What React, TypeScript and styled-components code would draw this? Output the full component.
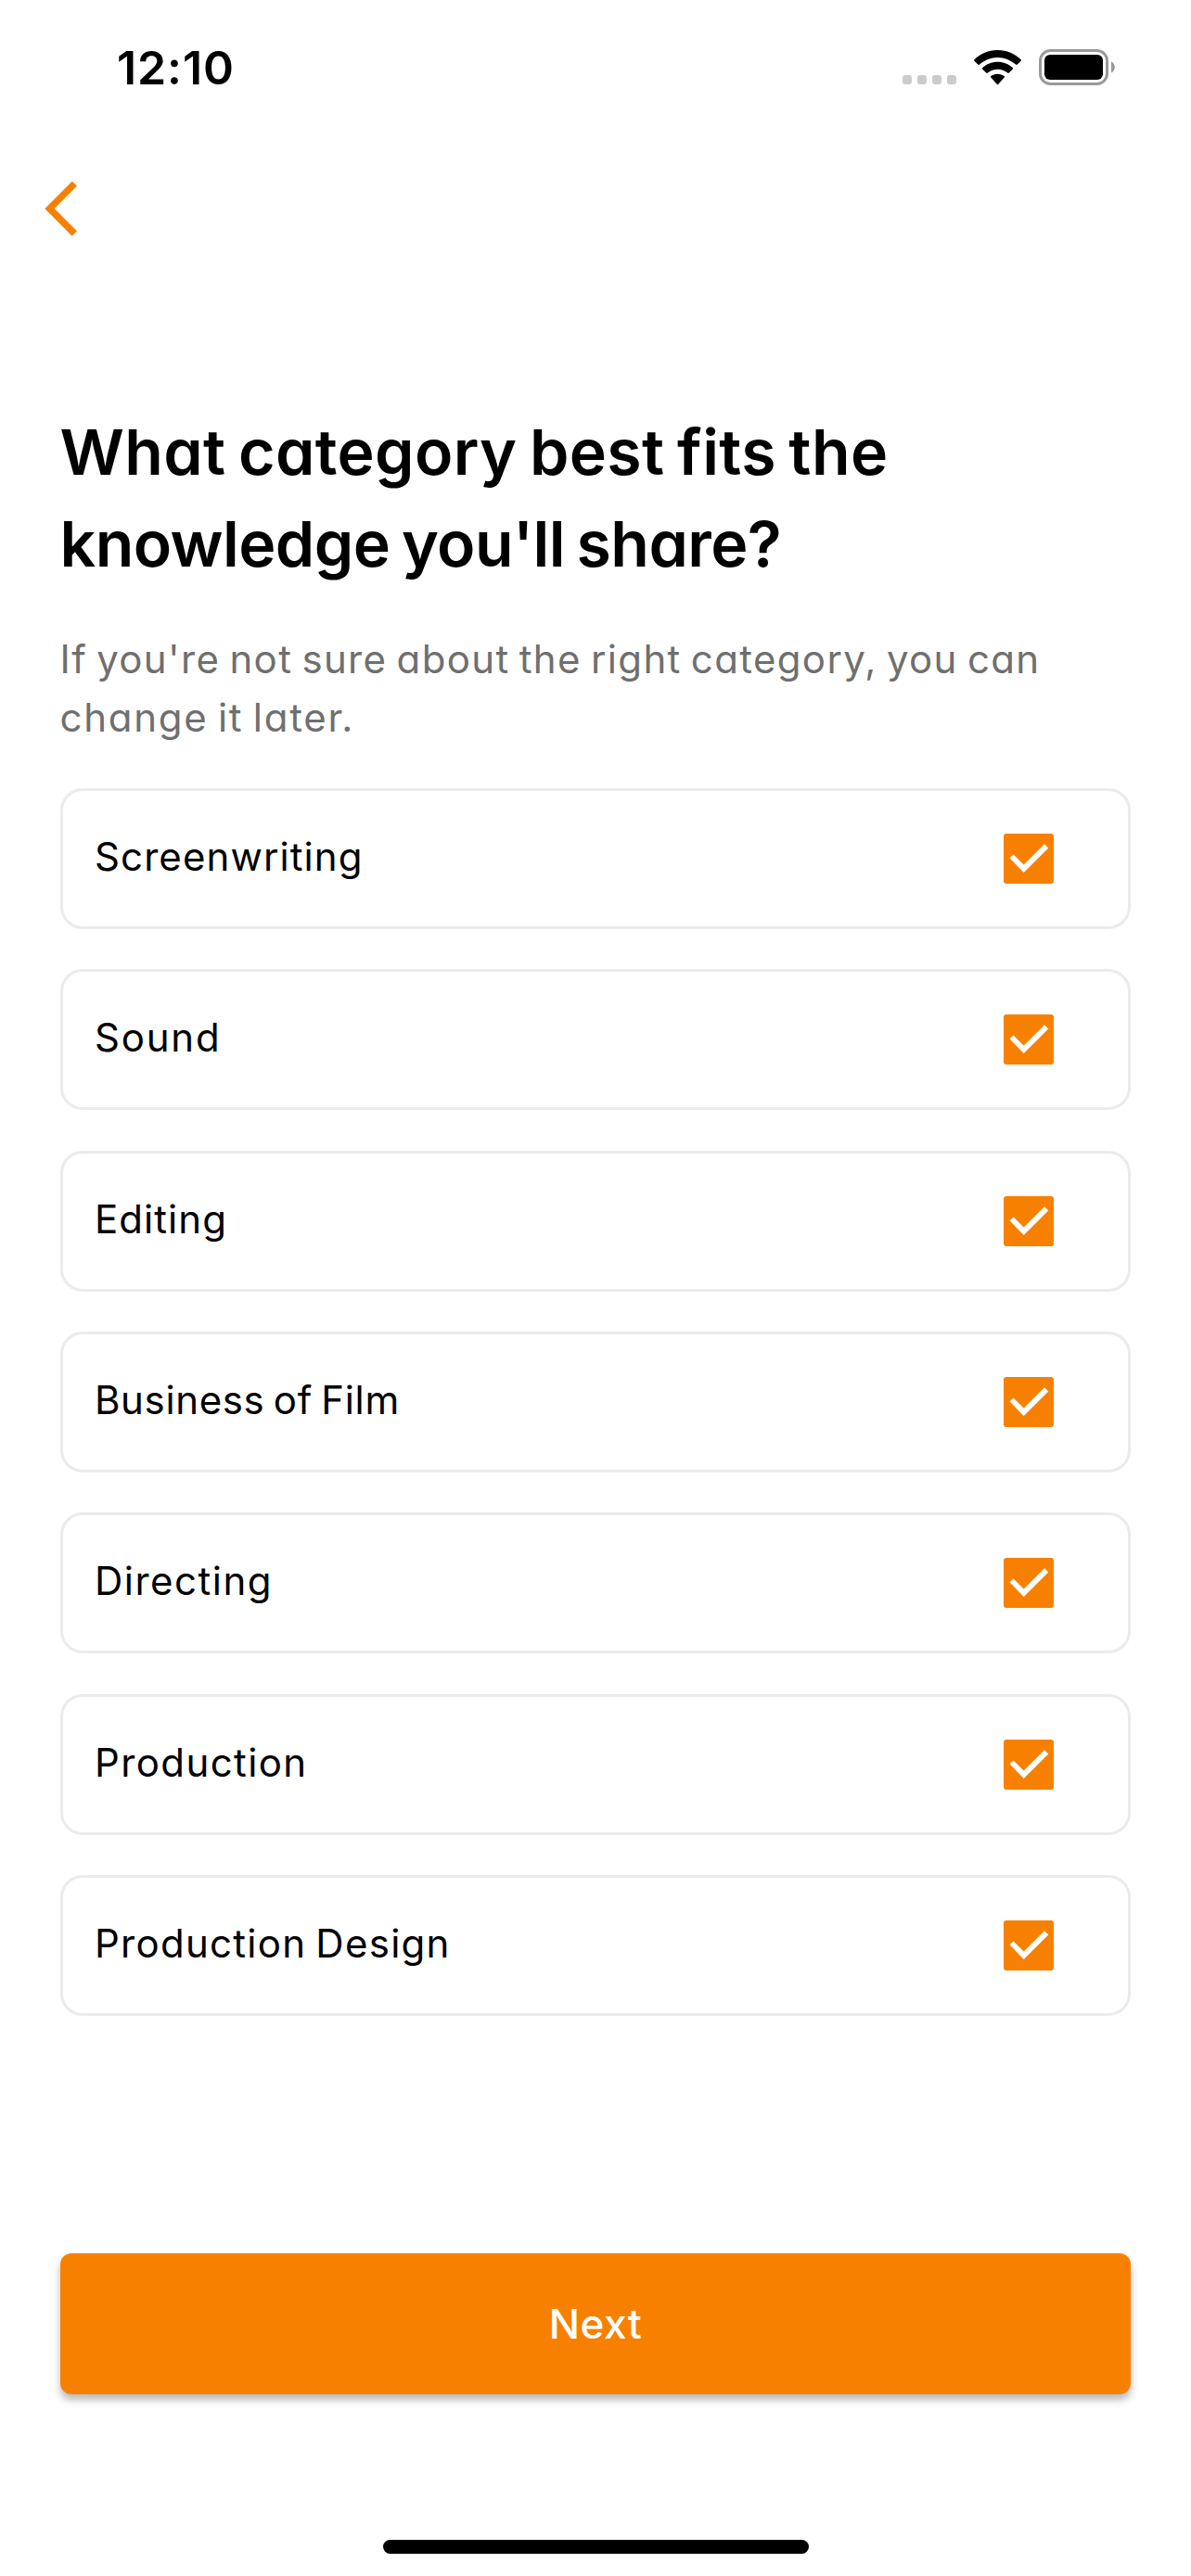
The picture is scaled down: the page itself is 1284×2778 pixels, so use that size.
import React from 'react';
import styled, { createGlobalStyle } from 'styled-components';

const orange = '#f88000';

const GlobalStyle = createGlobalStyle`
  * { box-sizing: border-box; }
  body {
    margin: 0;
    background: #fff;
    color: #000;
    font-family: Inter, "Open Sans", sans-serif;
  }
`;

const Screen = styled.div`
  display: flex;
  flex-direction: column;
  width: 1284px;
  height: 2778px;
  background: #fff;
  overflow: hidden;
`;

const StatusBar = styled.header`
  display: flex;
  justify-content: space-between;
  height: 141px;
  padding: 43px 82px 0 126px;
`;

const Clock = styled.time`
  font-size: 50px;
  font-weight: 600;
  line-height: 60px;
  letter-spacing: 0.9px;
`;

const StatusIcons = styled.div`
  display: flex;
  align-items: flex-end;
  height: 49px;
`;

const Dots = styled.div`
  display: flex;
  gap: 6px;
  margin: 0 19px 1px 0;
`;

const Dot = styled.i`
  width: 10px;
  height: 10px;
  border-radius: 3.2px;
  background: #cbcbcb;
`;

const StatusSvg = styled.svg<{ $gap?: number }>`
  display: block;
  margin-right: ${(p) => p.$gap ?? 0}px;
`;

const NavBar = styled.nav`
  display: flex;
  align-items: center;
  height: 168px;
  padding-left: 48px;
`;

const BackButton = styled.button`
  display: flex;
  padding: 0;
  border: 0;
  background: none;
`;

const Content = styled.main`
  display: flex;
  flex-direction: column;
  padding: 129px 65px 0;
`;

const Title = styled.h1`
  margin: 0 0 43px;
  font-size: 68px;
  font-weight: 600;
  line-height: 99px;
  word-spacing: -4px;
  font-feature-settings: "cv11";
`;

const Hint = styled.p`
  margin: 0 0 45px;
  font-size: 42px;
  line-height: 63px;
  word-spacing: -3px;
  color: #6f6f6f;
  font-feature-settings: "cv11";
`;

const Line = styled.span<{ $tracking: number }>`
  display: block;
  margin-left: -0.5px;
  letter-spacing: ${(p) => p.$tracking}px;
  white-space: nowrap;
`;

const List = styled.ul`
  display: flex;
  flex-direction: column;
  gap: 43.33px;
  margin: 0;
  padding: 0;
  list-style: none;
`;

const Card = styled.li`
  display: flex;
  align-items: center;
  justify-content: space-between;
  height: 152px;
  padding: 0 80px 0 34px;
  border: 3px solid #ebebeb;
  border-radius: 24px;
`;

const Label = styled.span<{ $tracking: number }>`
  padding-bottom: 4px;
  font-size: 42px;
  line-height: 60px;
  letter-spacing: ${(p) => p.$tracking}px;
  word-spacing: -3px;
  font-feature-settings: "cv11";
`;

const Checkbox = styled.span`
  display: block;
  width: 54px;
  height: 54px;
  border-radius: 3px;
  background: ${orange};
`;

const NextButton = styled.button`
  height: 152px;
  margin-top: 256.5px;
  padding: 0;
  border: 0;
  border-radius: 12px;
  background: ${orange};
  box-shadow: 0 6px 9px rgba(0, 0, 0, 0.28);
  color: #fff;
  font: 500 44px/60px Inter, "Open Sans", sans-serif;
  letter-spacing: 0.5px;
`;

const HomeIndicator = styled.div`
  width: 459px;
  height: 15px;
  margin: auto auto 24px;
  border-radius: 7.5px;
  background: #000;
`;

const categories = [
  { name: 'Screenwriting', tracking: 1.1 },
  { name: 'Sound', tracking: 1.8 },
  { name: 'Editing', tracking: 1.05 },
  { name: 'Business of Film', tracking: 0.64 },
  { name: 'Directing', tracking: 1.5 },
  { name: 'Production', tracking: 1.4 },
  { name: 'Production Design', tracking: 1.27 },
];

export default function App() {
  return (
    <>
      <GlobalStyle />
      <Screen>
        <StatusBar>
          <Clock>12:10</Clock>
          <StatusIcons>
            <Dots>
              <Dot />
              <Dot />
              <Dot />
              <Dot />
            </Dots>
            <StatusSvg $gap={19} width="51" height="38" viewBox="0 0 51 38" fill="#000">
              <path d="M25.5 0C35.3 0 44.2 3.8 50.6 10.2C51.1 10.7 51.1 11.2 50.6 11.7L46.7 15.6C46.2 16.1 45.6 16.1 45.1 15.6C39.7 10.9 33 8 25.5 8C18 8 11.3 10.9 5.9 15.6C5.4 16.1 4.8 16.1 4.3 15.6L0.4 11.7C-0.1 11.2 -0.1 10.7 0.4 10.2C6.8 3.8 15.7 0 25.5 0Z" />
              <path d="M25.5 12.8C31.9 12.8 37.5 15.2 41.7 19.1C42.2 19.6 42.2 20.2 41.7 20.7L37.8 24.5C37.3 25 36.7 25 36.2 24.5C33.3 22.1 29.6 20.7 25.5 20.7C21.4 20.7 17.7 22.1 14.8 24.5C14.3 25 13.7 25 13.2 24.5L9.3 20.7C8.8 20.2 8.8 19.6 9.3 19.1C13.5 15.2 19.1 12.8 25.5 12.8Z" />
              <path d="M25.5 25.7C28.3 25.7 30.8 26.6 32.7 28.1C33.2 28.5 33.2 29.1 32.7 29.6L26.3 36.8C25.8 37.4 25.2 37.4 24.7 36.8L18.3 29.6C17.8 29.1 17.8 28.5 18.3 28.1C20.2 26.6 22.7 25.7 25.5 25.7Z" />
            </StatusSvg>
            <StatusSvg width="82" height="39" viewBox="0 0 82 39">
              <rect x="1.5" y="1.5" width="72" height="36" rx="11" fill="none" stroke="#999" strokeWidth="3" />
              <rect x="6" y="6" width="63" height="27" rx="6" fill="#000" />
              <path d="M78 13.5C83 15.5 83 23.5 78 25.5Z" fill="#999" />
            </StatusSvg>
          </StatusIcons>
        </StatusBar>
        <NavBar>
          <BackButton aria-label="Back">
            <svg width="36" height="60" viewBox="0 0 36 60" fill={orange}>
              <path d="M29.7 0.4L35 5.6L10.7 30L35 54.2L29.7 59.5L0.3 30Z" />
            </svg>
          </BackButton>
        </NavBar>
        <Content>
          <Title>
            <Line $tracking={0.37}>What category best fits the</Line>
            <Line $tracking={-0.57}>knowledge you'll share?</Line>
          </Title>
          <Hint>
            <Line $tracking={1.35}>If you're not sure about the right category, you can</Line>
            <Line $tracking={1.72}>change it later.</Line>
          </Hint>
          <List>
            {categories.map(({ name, tracking }) => (
              <Card key={name}>
                <Label $tracking={tracking}>{name}</Label>
                <Checkbox role="checkbox" aria-checked="true" aria-label={name}>
                  <svg width="54" height="54" viewBox="0 0 54 54" fill="#fff">
                    <path d="M6.5 26.3L10.6 22.4L21.7 33.6L44 11.2L48.3 15.4L21.7 42Z" />
                  </svg>
                </Checkbox>
              </Card>
            ))}
          </List>
          <NextButton>Next</NextButton>
        </Content>
        <HomeIndicator />
      </Screen>
    </>
  );
}
